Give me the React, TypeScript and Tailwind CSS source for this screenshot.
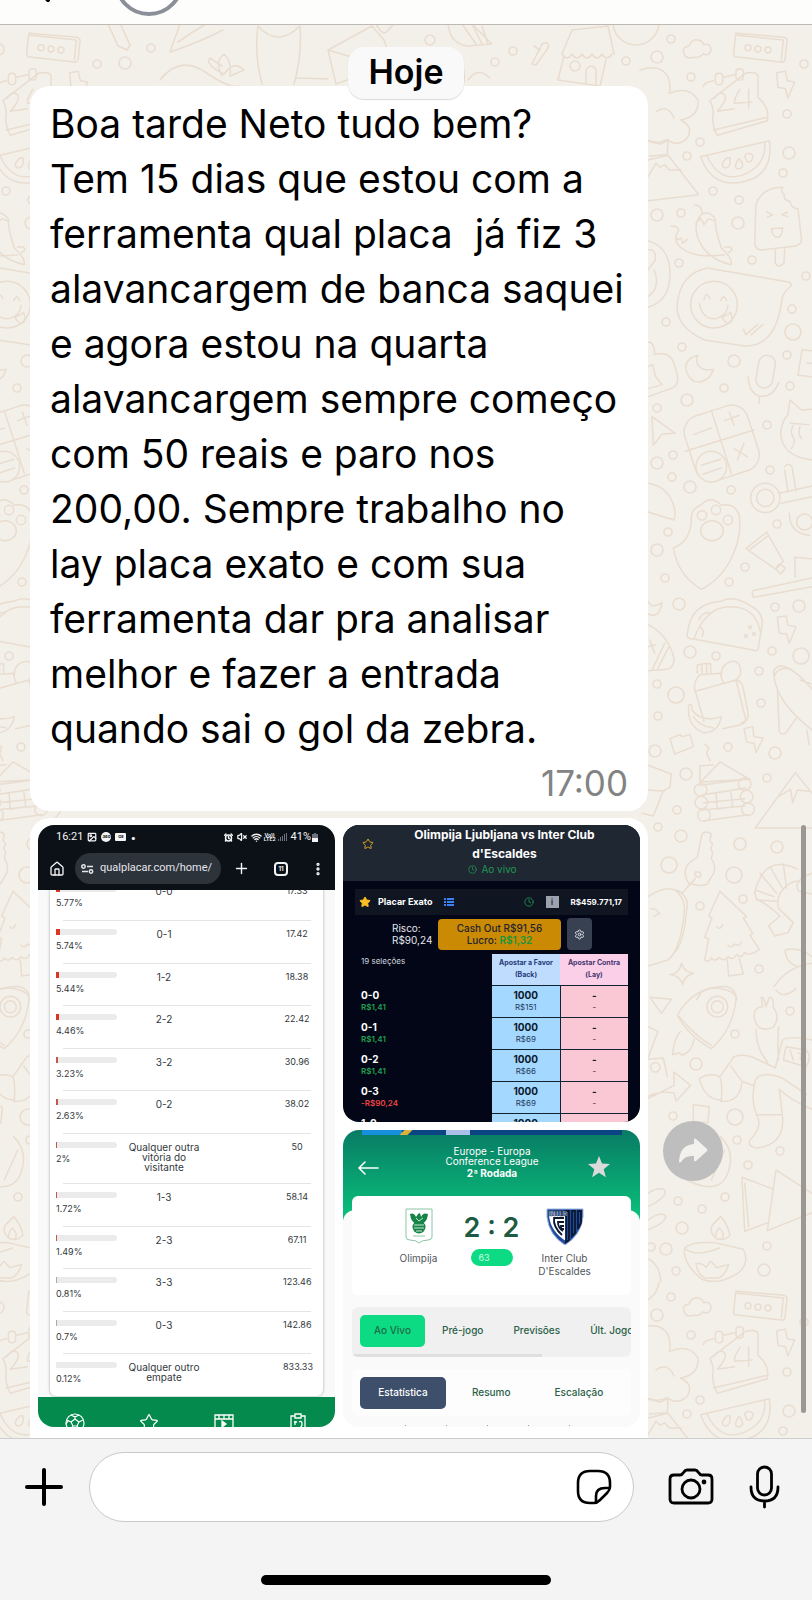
import { useState } from "react"
import { Home, Plus, EllipsisVertical, Star, Clock, Settings, AlarmClock, VolumeX, Wifi, Image as ImageIcon } from "lucide-react"

type Placar = {
  nome: string;
  pct: number;
  odd: string;
};

type Selecao = {
  nome: string;
  lucro: string;
  valor: string;
};

const linhas = [
  "Boa tarde Neto tudo bem?",
  "Tem 15 dias que estou com a",
  "ferramenta qual placa  já fiz 3",
  "alavancargem de banca saquei",
  "e agora estou na quarta",
  "alavancargem sempre começo",
  "com 50 reais e paro nos",
  "200,00. Sempre trabalho no",
  "lay placa exato e com sua",
  "ferramenta dar pra analisar",
  "melhor e fazer a entrada",
  "quando sai o gol da zebra.",
];

const placares: Placar[] = [
  { nome: "0-0", pct: 5.77, odd: "17.33" },
  { nome: "0-1", pct: 5.74, odd: "17.42" },
  { nome: "1-2", pct: 5.44, odd: "18.38" },
  { nome: "2-2", pct: 4.46, odd: "22.42" },
  { nome: "3-2", pct: 3.23, odd: "30.96" },
  { nome: "0-2", pct: 2.63, odd: "38.02" },
  { nome: "Qualquer outra vitória do visitante", pct: 2, odd: "50" },
  { nome: "1-3", pct: 1.72, odd: "58.14" },
  { nome: "2-3", pct: 1.49, odd: "67.11" },
  { nome: "3-3", pct: 0.81, odd: "123.46" },
  { nome: "0-3", pct: 0.7, odd: "142.86" },
  { nome: "Qualquer outro empate", pct: 0.12, odd: "833.33" },
];

const selecoes: Selecao[] = [
  { nome: "0-0", lucro: "R$1,41", valor: "R$151" },
  { nome: "0-1", lucro: "R$1,41", valor: "R$69" },
  { nome: "0-2", lucro: "R$1,41", valor: "R$66" },
  { nome: "0-3", lucro: "-R$90,24", valor: "R$69" },
  { nome: "1-0", lucro: "R$1,41", valor: "R$69" },
];

// [x, y, radius] of the loose bubbles in the wallpaper
const bolhas = [
  [671, 39, 4], [657, 57, 6], [691, 77, 4], [804, 64, 4], [787, 114, 4], [789, 153, 6], [783, 173, 4], [700, 142, 4],
  [687, 156, 4], [713, 191, 4], [739, 200, 4], [738, 223, 6], [657, 215, 6], [681, 213, 4], [752, 260, 4], [679, 263, 4],
  [806, 276, 4], [792, 309, 4], [793, 332, 8], [666, 322, 4], [682, 347, 4], [734, 361, 6], [787, 355, 4], [790, 386, 4],
  [724, 388, 4], [687, 400, 6], [657, 408, 4], [767, 425, 4], [673, 455, 4], [657, 463, 6], [672, 477, 4], [690, 487, 6],
  [731, 490, 4], [770, 470, 4], [777, 524, 4], [668, 532, 4], [657, 550, 6], [745, 567, 4], [729, 582, 4], [665, 578, 4],
  [679, 604, 6], [775, 607, 4], [799, 606, 6], [690, 652, 6], [716, 656, 4], [772, 651, 4], [801, 656, 8], [759, 671, 4],
  [657, 684, 4], [676, 695, 8], [761, 703, 4], [658, 716, 4], [655, 751, 6], [728, 747, 4], [775, 753, 6], [686, 774, 6],
  [767, 778, 4], [677, 810, 4], [658, 827, 4], [681, 836, 6], [669, 865, 8], [740, 844, 6], [777, 847, 6], [734, 875, 8],
  [743, 899, 4], [700, 906, 4], [759, 969, 4], [735, 1034, 4], [790, 1011, 4], [696, 1064, 6], [673, 1116, 4], [735, 1117, 8],
  [737, 1140, 4], [780, 1151, 4], [748, 1165, 4], [725, 1197, 4], [678, 1201, 4], [702, 1209, 4], [682, 1228, 6], [666, 1249, 6],
  [651, 1247, 4], [767, 1246, 4], [764, 1270, 6], [676, 1271, 4], [151, 48, 4], [125, 63, 6], [513, 51, 4], [495, 62, 4],
  [626, 61, 4], [430, 40, 5],
];

function PapelDeParede() {
  return (
    <svg className="absolute inset-0 h-full w-full" aria-hidden="true">
      <defs>
        <pattern id="doodles" x="105" y="-1" width="707" height="1258" patternUnits="userSpaceOnUse">
          <g transform="translate(-105 -24)" fill="none" stroke="#e9ddd0" strokeWidth="1.6" strokeLinejoin="round" strokeLinecap="round">
            {bolhas.map(([x, y, r], i) => <circle key={i} cx={x} cy={y} r={r} />)}

            <path d="M108 24l10 22 9 4 3-5-10-22M170 52l10-28M170 52q30-10 53-22M178 42q14-10 28-18M160 80q20-25 45-8t34 14M222 76q-8-14 2-22 8 8 6 20M224 74q10-14 20-4l-14 6M224 74q-20-10-14-16l12 8M262 84q-8-30-4-58q20 22 42 0q2 30-6 58M296 78l32 1M328 50l44-24 12 14 8 24-56 20zM328 50l34 10M376 24q8 14 12 6l6-6" />
            <path d="M448 24q2 20 20 22l24-2-20-20M462 24l14 20M472 24l10 20M482 26l6 18M404 70q10-22 22-12 18-20 28 4 12 0 10 20M532 64l10-20q8-4 6 4l-12 17zM540 50l-6-4M562 54l10-24 36-4 6 28M562 54q5 8 10 0 5 8 10 0 5 8 10 0 5 8 10 0 5 8 10 0M564 56l-6 24 42 6 6-26M586 84v-14q6-8 10 0v16M468 80q10-14 22-2" />
            <circle cx="575" cy="66" r="5" />
            <circle cx="636" cy="22" r="23" />

            <g transform="translate(640 20) scale(.3333)" strokeWidth="4.500">
              <path d="M135 106q-14-24 12-28 10-26 34-16 14 12 10 12 22-6 22 16-4 20-24 12-10 12-28 10-22 6-26-6zM287 40l146 12q10 4 8 12l-6 56q-4 8-12 6l-138-16q-6-4-4-10l6-56q2-6 8-4M292 46l138 14-6 60" />
              <circle cx="324" cy="83" r="9" /><circle cx="354" cy="87" r="9" /><circle cx="384" cy="90" r="9" />
              <path d="M0 150q60-20 84 20 10 30 4 50 60-24 86 20 4 50-52 60 40 20 20 54-30 30-60 4-30 16-60 2M48 276q34-26 54 18M190 200q0-12 30-18M250 172l34-8M316 160q36-8 38 8v64q36 30 28 70l-150 44q-14-24-14-54 6-20-8-50zM220 330l162-38" />
              <rect x="226" y="160" width="22" height="34" rx="10" /><rect x="288" y="146" width="22" height="34" rx="10" />
              <path d="M222 236q12-24 32-12 10 14-22 50l52-8M300 208q-20 30-16 42l52-4M326 208v56" />
              <path d="M410 158l26-4 6 28 22 4-20 48-8-28-22-4zM182 410l206-48q12 80-44 112-120 50-162-64zM200 406q40 90 120 54 60-30 54-92M248 430q10-20 22-16 4 30-16 30-10-6-6-14M286 440q4-20 12-24 20 24 0 30-10 2-12-6M314 408q10-16 26 0-6 24-20 16z" />
              <path d="M24 364l36 8 24-10-2 42-54 4M24 420l60-14 92 118-152 18M24 470l24-40 12 12 14-8 14 16 36 0" />
              <path d="M428 502q-60 0-80 50l-4 120q4 18 20 18l104-12q20-8 16-24l-10-88q-20 0-24-22-20-2-18-22-12-8-4-20M406 690v40q10 16 26 0l2-42M380 576l18 8-16 8M442 576l-16 8 18 6M394 626l34-2q-2 28-16 28t-18-26" />
              <path d="M164 554q24 2 22 28-24 20-16 60 20 74 104 92 4-20-30-50-20-60-18-86-16-26-40-16M94 618q22 0 22 14-16 20-2 42 40 44 140 30M168 610l14-16 10 20 14-18 16 6M108 660l16-6 4 16 14-12M254 682q20-6 22 8l-10 8" />
              <path d="M24 662q66 20 66 100t-66 100M24 690q24-6 22 30l-22 30M24 830q40-30 18-80M112 850q10-90 90-106l244 42q18 8-4 22-16 16-18 44-20 130-110 126l-120-18q-90-40-82-110z" />
              <circle cx="222" cy="854" r="70" /><path d="M178 850q10 50 50 46 34-8 36-40M192 838q6-26 18-2M242 842q10-22 18 0M246 892l26-14q10 26-4 32-14 0-22-18M310 928l8 16 34-30M334 944l34-30" />
              <path d="M24 966q20 0 20 38 50-16 62 40 18 50-10 60l-70 26M24 1040l14-6 8 34 20 26-42 12M174 1006q-40 10-36 44 12 40 44 36 30-8 38-38-30 6-44-10-10-14-2-32" />
              <rect x="352" y="1006" width="50" height="98" rx="24" transform="rotate(10 377 1055)" />
              <path d="M324 1070q4 50 34 58 40 6 58-40M358 1130v20M516 992l-30-2-12 76 42 4M500 1030h16M36 1190l4 86 26-34 40-2z" />
              <rect x="146" y="1168" width="198" height="204" rx="50" transform="rotate(-18 245 1270)" />
              <path d="M214 1172l60 188M136 1294l206-64M160 1244l54-20M254 1202l44-16M268 1176l14 40M282 1286l40 24M312 1270l-20 50" />
              <circle cx="214" cy="1340" r="46" fill="#f3efe9" /><path d="M184 1336l58-18M190 1362l54-18" />
              <path d="M516 1320q-90-10-94-80 4-40 22-56l6-44 34 30 32-2M450 1210l56 4M460 1216q-12 20 0 36 8 16-6 34M480 1220q-8 20 4 36M434 1340q10-14 22 0l12 74M434 1350l10 66" />
              <circle cx="376" cy="1434" r="44" /><circle cx="376" cy="1434" r="26" /><path d="M418 1420l98-22M424 1450l92-20M24 1390q70 10 82 90l-4 20-78-24" />
            </g>

            <g transform="translate(640 500) scale(.3333)" strokeWidth="4.500">
              <path d="M100 144q54-20 54-90 0-30 30-40 30-30 60 2 40-10 54 30 8 60-20 120-30 70-94 102-70-40-84-124z" />
              <circle cx="186" cy="46" r="14" /><circle cx="228" cy="30" r="14" /><circle cx="264" cy="60" r="14" /><ellipse cx="216" cy="92" rx="34" ry="30" />
              <path d="M318 146l62-50 50 88-22 24zM330 148l56-42M406 206l12-14 18 12-14 18zM338 272l178-38M342 292l174-32M338 272q-4 16 6 20M466 232l-2-60 50 4M448 40q0 60 60 66" /><circle cx="494" cy="66" r="24" />
              <path d="M24 304q10 24 42 4-8 50-42 34M24 374q60 30 78 100 2 24-18 34l-60 4M36 510l38-80M52 508l34-66M30 420l14 40M24 440l22-6M142 400q10-90 100-96 40-20 90 14 40 20 34 60l-12 70q-6 8-14 2l-176-32q-26 0-22-18M162 416q40-110 130-94 60 10 70 80M176 360q14-30 40-20M178 380q20 10 8 30" />
              <circle cx="330" cy="382" r="4" /><circle cx="342" cy="402" r="4" /><circle cx="318" cy="408" r="4" />
              <path d="M412 352l26-4 6 28 24 4-20 50-8-28-22-2zM166 574l122-34 26 106q10 20-12 28l-54 12M166 574l26 90M172 520v-24q20-8 40-4v28M186 520v-26M200 520v-26M164 572q-4-30 16-48l60-4 10 30M244 526q0-40 40-42 20 4 18 40l-16 18M288 540q20 0 24 36l12 60q4 30-20 32M146 616q12-6 10 14 30 40 88 20-10 50-54 48-50-20-44-82M160 650q20 30 60 34" />
              <path d="M402 530q-6-30 22-32 40 6 92 70M402 530q10 80 114 160M402 530q10-30 50-24M412 570l6 124q8 14 20 4l30-42M480 540l36 12M500 690l8 44M90 716l30-12 6 6 24-6 10 36-56 22zM192 732l14 10-6 20 10 20M312 686l26-6 4 30 28 4-22 44-6-28-22-4z" />
              <path d="M182 846l58-60 90 52zM180 800v46M180 798l40-4M180 856l138-18M188 884l130-20M190 908l124-12M184 930l130-12M192 962l134-18M228 878l44-6 6 48-46 8z" />
              <circle cx="182" cy="870" r="19" /><circle cx="184" cy="908" r="19" /><circle cx="192" cy="945" r="19" /><circle cx="314" cy="852" r="19" /><circle cx="320" cy="890" r="19" /><circle cx="324" cy="928" r="19" />
              <path d="M346 984l120-166 50 62M346 984l170 0M418 888l34-20 6 40 14-38 34 4M24 796l70 26-4 40-20 10-30 76-34-8M24 870l50 4" />
              <path d="M186 1002q14-12 28 0l-4 20 8 10-6 14 6 12-4 18q14 20 8 42l-20 34q-20 10-56-2-30-50 26-78zM166 1136l-40 44M176 1132q-20-8-8-16 20-2 12 16M24 1190q90-60 110 30-10 130-50 160l-60 18M110 1170q40 20 30 60-10 110-40 130M32 1226q20 0 24 14M40 1250l20-10" />
              <path d="M240 1174l-34 74 10 6-22 58 12 4-12 64q12 10 20-6 12 14 24-2 14 16 26-2 14 14 26-6 14 14 24-6 16 12 44-10l-28-42 8-6-28-46 10-4zM262 1380l4 48 44-6-12-46M230 1280q10 12 18-6M264 1336q10 10 20-4 12 10 22-6M90 1424q30-4 34-34 10 28 36 30-28 10-32 34-10-28-38-30M170 1500q20-50 90-30 30 10 30 30" />
              <path d="M474 1108q-100-50-130 70l6 20q40 20 70 50l-34 30 18 30 40-10 16-30-44-42q-10-30 14-60 30-30 50-20M360 1120l50 60M390 1100l40 70M430 1092l10 74M346 1170l56 20M350 1200l60 4M516 1120q-60 20-40 54l40 8M402 1460q40-60 114-70M408 1470q20 30 60-4M436 1350q40-10 80 20M436 1350q0 40 40 50" />
            </g>

            <g transform="translate(640 980) scale(.3333)" strokeWidth="4.500">
              <path d="M112 106q50-90 150-86 30 10 26 40-10 90-74 146-70-40-102-100M118 110q50 60 96 86M122 154q-20 20-24 70l20-6 8 8q30-10 36-48" />
              <circle cx="232" cy="80" r="31" /><circle cx="232" cy="80" r="18" />
              <path d="M30 52l64 6-30 42zM24 140l30 14-30 80M24 238l46-4 12 56M24 356q40-20 78-40v-40l50 40-44 48-6-26q-50-6-78 12" /><circle cx="46" cy="262" r="14" />
              <path d="M342 110q0-30 26-30l-4-28q8-2 14 28l10-28q14-4 12 30 22 30 0 60-50 20-58-32M348 148q0 60 36 100M416 140q-4 50 0 100M240 290l42-60q30-10 62 4l62 30M178 296q30-20 60-6 10 10 6 70-50 0-66-64M242 364q60 4 64-60l-34-46M306 304l38 14M406 264l20-80q10-20 90-4M346 300q-16 60 4 102 20 40-20 78-10 20 22 24 80-10 76-90l-10-86q30 30 98 60M346 300q20-30 80-6l74 50M348 404h78M430 240l8-40 60 10q20 20 0 50zM450 210l10 30M476 220q14 0 4 16l10 8" />
              <path d="M160 374l48 6-4 48-44-4zM140 600q120 60 132-60 0-40-30-70M214 600l40-90M306 592l90 34M306 592l8 162 70-26M326 740l-12-130M408 570l108 70M408 570l-26 182 134-54M24 640q30-20 50-10 10 20-50 50M24 720q40-30 54-10-4 20-54 40M24 836q40 20 38 80-10 40-38 50" />
              <path d="M134 804q20-20 90-16l86 20q20 40-14 70-60 40-110 20-60-50-52-94M134 804q30 30 104 0M226 774q-20-20-8-40l24-24q20 20 28 56-20 20-44 8M226 774q0-20 12-30 20 20 6 34M168 850q20 0 30 12l14-18 20 20q14-8 34-10-10 30-30 40h-40q-24-10-28-44" />
            </g>
          </g>
        </pattern>
      </defs>
      <rect width="100%" height="100%" fill="#f3efe9" />
      <rect width="100%" height="100%" fill="url(#doodles)" />
    </svg>
  )
}

function PrintPlacares() {
  return (
    <section className="row-span-2 flex flex-col overflow-hidden rounded-2xl bg-[#f9f9f9]">
      <div className="h-[65px] shrink-0 bg-[#0b1117] text-gray-100">
        <div className="flex h-6 items-center gap-1 pl-[18px] pr-[17px] text-[10px]">
          <span className="font-['Roboto',sans-serif] text-[11px]">16:21</span>
          <ImageIcon size={10} strokeWidth={3} className="shrink-0" />
          <span className="flex size-[10px] shrink-0 items-center justify-center rounded-full bg-gray-100 text-[4px] font-bold text-black">360</span>
          <span className="flex h-[8px] w-[11px] shrink-0 items-center justify-center rounded-[1px] bg-gray-100 text-[4px] font-bold text-black">GE</span>
          <span>•</span>
          <AlarmClock className="ml-auto shrink-0" size={9} strokeWidth={4} />
          <VolumeX className="shrink-0" size={10} strokeWidth={3} />
          <Wifi className="shrink-0" size={11} strokeWidth={3} />
          <span className="-ml-[2px] text-center text-[5px] font-bold leading-[4px]">Vo))<br />LTE2</span>
          <svg className="-ml-[2px] shrink-0" width="9" height="8" viewBox="0 0 9 8" fill="#6b7280"><path d="M0 6h1v2H0zM2 4h1v4H2zM4 3h1v5H4zM6 1h1v7H6zM8 0h1v8H8z" /></svg>
          <span className="-mr-[3px] font-['Roboto',sans-serif] text-[11px]">41%</span>
          <svg className="shrink-0" width="6" height="9" viewBox="0 0 6 9"><path d="M2 0h2v1h2v8H0V1h2z" fill="#6b7280" /><path d="M0 5h6v4H0z" fill="#f3f4f6" /></svg>
        </div>
        <div className="mt-1 flex h-[31px] items-center pl-[11px] pr-[9px]">
          <button aria-label="Início" className="shrink-0"><Home size={16} strokeWidth={2} /></button>
          <div className="ml-[10px] flex h-[31px] min-w-0 flex-1 items-center gap-[6px] whitespace-nowrap rounded-full bg-[#2d333b] pl-[6px] font-['Roboto',sans-serif] text-[11px] text-gray-200">
            <svg className="shrink-0" width="13" height="10" viewBox="0 0 13 10" fill="none" stroke="currentColor" strokeWidth="1.5"><circle cx="2.5" cy="2.5" r="1.7" /><path d="M6 2.5h6M1 7.5h6" /><circle cx="10" cy="7.5" r="1.7" /></svg>
            qualplacar.com/home/
          </div>
          <button aria-label="Nova aba" className="ml-3 shrink-0"><Plus size={17} strokeWidth={2} /></button>
          <button aria-label="Abas" className="ml-6 flex size-[14px] shrink-0 items-center justify-center rounded-[4px] border-2 border-gray-100 text-[6px] font-bold">11</button>
          <button aria-label="Menu" className="ml-[22px] shrink-0"><EllipsisVertical size={16} strokeWidth={3} /></button>
        </div>
      </div>

      <div className="min-h-0 flex-1 overflow-hidden px-3">
        <div className="-mt-3 rounded-md bg-white pl-[13px] pr-3 shadow-[0_0_3px_rgba(0,0,0,0.35)]">
          <table className="w-full table-fixed border-collapse text-[9px] text-[#33383d]">
            <tbody>
              {placares.map((p) => (
                <tr key={p.nome} className="h-[42px] border-b border-[#e4e4e4] last:border-b-0 even:h-[43px]">
                  <td className="w-16 pt-2 align-top">
                    <div className="-ml-[7px] h-[6px] w-[61px] overflow-hidden rounded-r-full bg-[#ebebeb]">
                      <div className={p.pct > 4 ? "h-full bg-[#dc3623]" : p.pct > 1 ? "h-full bg-[#c4574b]" : "h-full bg-[#aaaaaa]"} style={{ width: `${p.pct}%` }} />
                    </div>
                    <div className="-ml-[7px] mt-[5px] leading-3">{p.pct}%</div>
                  </td>
                  <td className="w-[74px] pt-2 pb-[11px] text-center align-top text-[10px] leading-[10px]">
                    {p.nome}
                  </td>
                  <td className="whitespace-nowrap pt-2 pl-[82px] text-center align-top leading-[10px]">{p.odd}</td>
                </tr>
              ))}
            </tbody>
          </table>
        </div>
      </div>

      <nav className="flex h-[30px] shrink-0 justify-around bg-[#058a4e] pt-4 text-white">
        <svg width="20" height="20" viewBox="0 0 20 20" fill="none" stroke="currentColor" strokeWidth="1.2"><circle cx="10" cy="10" r="9" /><path d="M10 6l4 3-2 4H8L6 9zM10 6V3M14 9l4-2M6 9L2 7M8 13l-3 4M12 13l3 4M6 2l4 2 4-2M1 11l2-3" /></svg>
        <Star size={20} strokeWidth={1.5} />
        <svg width="20" height="20" viewBox="0 0 20 20" fill="none" stroke="currentColor" strokeWidth="1.3"><path d="M1 2h18v16H1zM1 6h18M5 2v4M10 2v4M15 2v4" /><path d="M8 8l4 3-4 3z" fill="currentColor" /></svg>
        <svg width="20" height="20" viewBox="0 0 20 20" fill="none" stroke="currentColor" strokeWidth="1.3"><path d="M7 3H3v16h14V3h-4M7 1h6v4H7zM7 8v4M6 9h3M11 9q3-2 3 2t-4 4" /></svg>
      </nav>
    </section>
  )
}

function PrintMercado() {
  return (
    <section className="flex h-[297px] flex-col overflow-hidden rounded-2xl bg-[#020617] text-white">
      <div className="flex h-14 shrink-0 items-start bg-[#1f2733] pl-[19px] pr-[13px]">
        <button aria-label="Favorito" className="mt-[13px] text-[#d9a22b]"><Star size={12} strokeWidth={2} /></button>
        <div className="flex flex-1 flex-col items-center pl-6 pr-4 text-center">
          <h2 className="whitespace-nowrap text-[12px] font-bold leading-[19px]">Olimpija Ljubljana vs Inter Club<br />d'Escaldes</h2>
          <span className="mr-6 flex items-center gap-1 text-[10px] leading-3 text-[#209653]"><Clock size={9} /> Ao vivo</span>
        </div>
      </div>

      <div className="mx-3 mt-2 flex h-[26px] shrink-0 items-center bg-[#0f1521] pl-1 pr-[6px]">
        <Star size={12} className="fill-[#fbbf24] text-[#fbbf24]" />
        <span className="ml-[7px] text-[9px] font-bold">Placar Exato</span>
        <svg className="ml-[11px]" width="10" height="8" viewBox="0 0 10 8" fill="#3b82f6"><path d="M0 0h2v2H0zM3 0h7v2H3zM0 3h2v2H0zM3 3h7v2H3zM0 6h2v2H0zM3 6h7v2H3z" /></svg>
        <Clock size={10} className="ml-auto text-[#209653]" />
        <span className="ml-3 flex h-3 w-[13px] items-center justify-center bg-[#9ca3af] text-[9px] font-bold text-[#374151]">i</span>
        <span className="ml-3 text-[8px] font-bold">R$459.771,17</span>
      </div>

      <div className="mt-[3px] flex h-8 shrink-0 items-center pl-[49px]">
        <p className="w-[46px] text-[10px] leading-3 text-gray-200">Risco:<br />R$90,24</p>
        <button className="h-[31px] w-[123px] rounded-sm bg-[#ca8a04] text-[10px] font-medium leading-3 text-[#1f2430]">
          Cash Out R$91,56<br />Lucro: <span className="font-semibold text-[#15963f]">R$1,32</span>
        </button>
        <button aria-label="Configurações" className="ml-[6px] flex h-8 w-[25px] items-center justify-center rounded-sm bg-[#374151] text-gray-200"><Settings size={11} /></button>
      </div>

      <table className="ml-[18px] mr-3 mt-1 table-fixed text-center">
        <thead>
          <tr className="h-[31px] text-[7px] leading-3">
            <th className="pt-px text-left align-top text-[8px] font-normal text-gray-300">19 seleções</th>
            <th className="w-[68px] bg-[#bfdbfe] font-bold text-[#243c78]">Apostar a Favor<br />(Back)</th>
            <th className="w-[68px] bg-[#fbcfe8] font-bold text-[#46366e]">Apostar Contra<br />(Lay)</th>
          </tr>
        </thead>
        <tbody>
          {selecoes.map((s) => (
            <tr key={s.nome} className="h-8 text-[8px] leading-3">
              <td className="pt-1 text-left align-top font-semibold">
                <div className="text-[10px] font-bold">{s.nome}</div>
                <div className={s.lucro.startsWith("-") ? "text-[#ef4444]" : "text-[#22a04f]"}>{s.lucro}</div>
              </td>
              <td className="border-t border-r border-[#123] bg-[#a5d8ff] pt-[3px] align-top text-[#1e3a5c]">
                <div className="text-[10px] font-bold text-[#0b1a2e]">1000</div>
                <div>{s.valor}</div>
              </td>
              <td className="border-t border-[#123] bg-[#fac8d5] pt-[3px] align-top text-[#4c2436]">
                <div className="text-[10px] font-bold text-[#0b1a2e]">-</div>
                <div>-</div>
              </td>
            </tr>
          ))}
        </tbody>
      </table>
    </section>
  )
}

function PrintJogo() {
  const [aba, setAba] = useState("Ao Vivo");

  return (
    <section className="flex h-[297px] flex-col overflow-hidden rounded-2xl bg-[#fafafa] text-[10px] text-[#2a6148]">
      <div className="h-[92px] shrink-0 bg-linear-to-b from-[#087b64] to-[#0bc47b] text-white">
        <div className="ml-[19px] mr-[18px] flex h-[5px] bg-[#0b4583]">
          <div className="w-10 bg-[#168fdd]" />
          <div className="h-[5px] w-2 -skew-x-45 bg-[#d9b23c]" />
          <div className="ml-9 w-6 bg-[#a9bfe8]" />
        </div>
        <div className="flex items-start pl-[14px] pr-[29px] pt-[11px]">
          <button aria-label="Voltar" className="mt-[15px]"><svg width="22" height="14" viewBox="0 0 22 14" fill="none" stroke="currentColor" strokeWidth="1.5" strokeLinecap="round"><path d="M21 7H2M8 1L2 7l6 6" /></svg></button>
          <h3 className="flex-1 pl-[18px] text-center font-normal leading-[10px]">
            Europe - Europa<br />Conference League
            <span className="mt-px block font-bold leading-3">2ª Rodada</span>
          </h3>
          <button aria-label="Favoritar" className="mt-[9px]"><svg width="24" height="24" viewBox="0 0 24 24" fill="#dadada"><path d="M12 1l3 7.600 8 .4-6.300 5.200 2.200 8L12 17.800 5.100 22.200l2.200-8L1 9l8-.4z" /></svg></button>
        </div>
      </div>

      <div className="-mt-3 flex-1 rounded-t-xl bg-[#fafafa] px-[9px]">
        <div className="-mt-[14px] flex h-[99px] justify-center rounded-md bg-white pt-3 text-center leading-[13px] text-[#50555a]">
          <div className="flex w-[80px] flex-col items-center">
            <svg width="28" height="36" viewBox="0 0 28 36" fill="none"><path d="M1 1h26v28q0 3-4 3-6 0-9 3-3-3-9-3-4 0-4-3z" stroke="#8cc4a4" fill="#fff" /><path d="M5 6q4-2 6 3l2-3 2-1 1 4q2-5 7-3-1 8-5 9H10Q6 14 5 6z" fill="#168347" /><circle cx="14" cy="19" r="6.500" fill="#168347" /><path d="M9 17h10M9 20h10M11 23h6M11 10l3 3 4-3" stroke="#c9e6d4" /><path d="M8 28h12" stroke="#8cc4a4" /></svg>
            <span className="mt-2">Olimpija</span>
          </div>
          <div className="flex w-[66px] flex-col items-center">
            <strong className="whitespace-pre pt-[5px] text-[27px] font-semibold leading-[30px] text-[#1f5b42]">2 : 2</strong>
            <span className="mt-[6px] h-[17px] w-[42px] rounded-full bg-[#0ddb84] pl-2 text-left text-[9px] leading-[17px] text-[#c9ffe6]">63</span>
          </div>
          <div className="flex w-[80px] flex-col items-center">
            <svg width="38" height="38" viewBox="0 0 38 38"><path d="M1 1h36v8q-2 18-18 28Q3 27 1 9z" fill="#1f4c9c" stroke="#9bb3dc" /><path d="M3 8h17v25Q5 24 3 8z" fill="#fff" /><path d="M20 3h3v29l-3 2zM26 3h3v22l-3 3zM32 3h3v12l-3 6zM18 10H8q-1 9 8 17M18 14h-6q0 6 5 9M18 18h-3v3h3" fill="none" stroke="#0c1730" strokeWidth="1.800" /><text x="3" y="8" fontSize="6" fontWeight="bold" fill="#fff" stroke="#0c1730" strokeWidth=".3">INTER</text></svg>
            <span className="mt-[6px]">Inter Club D'Escaldes</span>
          </div>
        </div>

        <div className="mt-3 h-[50px] overflow-hidden rounded-md bg-[#f0f0f0]">
          <div className="flex h-[47px] items-center gap-3 whitespace-nowrap pl-2 font-medium">
            {["Ao Vivo", "Pré-jogo", "Previsões", "Últ. Jogos"].map((t) => (
              <button
                key={t}
                onClick={() => setAba(t)}
                className={aba === t ? "-mr-1 h-8 w-[65px] shrink-0 rounded-[5px] bg-[#0ddb84] text-[#1c6d47]" : "h-8 shrink-0 px-[9px]"}
              >
                {t}
              </button>
            ))}
          </div>
          <div className="h-[3px] w-[68%] bg-[#dfdfdf]" />
        </div>

        <div className="mt-3 flex h-[47px] items-center rounded-md bg-[#fdfdfd] pl-2 font-medium">
          <button className="h-8 w-[86px] rounded-[5px] bg-[#3d4f6b] text-white">Estatística</button>
          <button className="ml-[26px]">Resumo</button>
          <button className="ml-11">Escalação</button>
        </div>
        <div className="mt-[9px] flex h-px gap-10 pl-[53px]">
          {[0, 1, 2, 3, 4].map((i) => <span key={i} className="h-px w-px bg-gray-400" />)}
        </div>
      </div>
    </section>
  )
}

export default function App() {
  const [texto, setTexto] = useState("");

  return (
    <div className="flex h-screen flex-col overflow-hidden bg-[#f4f4f4] font-['Inter',sans-serif] text-black">
      <header className="h-[25px] shrink-0 overflow-hidden border-b border-[#bdbab5] bg-[#fdfdfb]">
        <svg width="200" height="24" viewBox="0 0 200 24" fill="none" aria-hidden="true">
          <circle cx="149" cy="-19" r="33" stroke="#8b8f98" strokeWidth="4" fill="#fff" />
          <path d="M44-4l4 4" stroke="#000" strokeWidth="4" strokeLinecap="round" />
        </svg>
      </header>

      <main className="relative min-h-0 flex-1 overflow-hidden">
        <PapelDeParede />
        <div className="relative flex flex-col pt-[22px] pl-[30px]">
          <div className="relative z-10 -mb-[13px] mr-[30px] flex h-[52px] items-center self-center rounded-2xl bg-[#f9f9f9] px-5 pb-1 text-[34px] font-semibold shadow-[0_1px_1px_rgba(0,0,0,0.15)]">Hoje</div>

          <article className="mr-[164px] rounded-[20px] bg-white px-5 pb-2 pt-[10px]">
            <p className="whitespace-pre text-[39px] leading-[55px]">{linhas.join("\n")}</p>
            <time className="mt-[7px] block text-right text-[35px] leading-10 text-[#838383]">17:00</time>
          </article>

          <div className="mt-[7px] flex items-center pr-[89px]">
            <article className="grid flex-1 grid-cols-2 gap-2 rounded-[20px] bg-white px-2 pb-14 pt-[7px]">
              <PrintPlacares />
              <PrintMercado />
              <PrintJogo />
            </article>
            <button aria-label="Encaminhar" className="ml-[15px] flex size-[60px] items-center justify-center rounded-full bg-[#bebebe]">
              <svg width="30" height="26" viewBox="0 0 30 26" fill="#f3f1ee"><path d="M16 1q1-1 2 0l11 10q1 1 0 2L18 23q-2 1-2-1v-4Q7 17 3 24q-2 2-2-1Q2 7 16 6z" /></svg>
            </button>
          </div>
        </div>
        <div className="absolute right-[6px] top-[800px] h-[588px] w-[5px] rounded-full bg-[#9b9894]" />
      </main>

      <footer className="shrink-0 border-t border-[#cdcdcd] bg-[#f4f4f4] pb-[15px]">
        <form className="flex items-center pl-[25px] pr-8 pt-[13px]" onSubmit={(e) => e.preventDefault()}>
          <button type="button" aria-label="Anexar" className="shrink-0">
            <svg width="38" height="38" viewBox="0 0 38 38" stroke="#000" strokeWidth="4" strokeLinecap="round"><path d="M19 2v34M2 19h34" /></svg>
          </button>
          <div className="ml-[26px] flex h-[70px] min-w-0 flex-1 items-center rounded-full border border-[#c9c9c9] bg-white pl-8 pr-[21px]">
            <input
              aria-label="Mensagem"
              value={texto}
              onChange={(e) => setTexto(e.target.value)}
              className="min-w-0 flex-1 bg-transparent text-[34px] focus:outline-none"
            />
            <button type="button" aria-label="Figurinhas" className="shrink-0">
              <svg width="36" height="36" viewBox="0 0 36 36" fill="none" stroke="#000" strokeWidth="2.600" strokeLinejoin="round"><path d="M34 18v-4Q34 2 22 2h-8Q2 2 2 14v8q0 12 12 12h4q3 0 6-3l7-7q3-3 3-6z" /><path d="M34 19h-5q-9 0-9 8v6" /></svg>
            </button>
          </div>
          <button type="button" aria-label="Câmera" className="ml-[34px] shrink-0">
            <svg width="46" height="38" viewBox="0 0 46 38" fill="none" stroke="#000" strokeWidth="2.800" strokeLinejoin="round"><path d="M6 7h6q2 0 3-2l1-1q1-2 3-2h8q2 0 3 2l1 1q1 2 3 2h6q4 0 4 4v20q0 4-4 4H6q-4 0-4-4V11q0-4 4-4z" /><circle cx="23" cy="21" r="9" /><circle cx="36" cy="14" r="1" fill="#000" /></svg>
          </button>
          <button type="button" aria-label="Gravar áudio" className="ml-[35px] shrink-0">
            <svg width="31" height="44" viewBox="0 0 31 44" fill="none" stroke="#000" strokeWidth="2.800" strokeLinecap="round"><rect x="8.500" y="2" width="14" height="28" rx="7" /><path d="M2 22q0 14 13.500 14T29 22M15.500 36v6" /></svg>
          </button>
        </form>
        <div className="mx-auto mt-[53px] h-[10px] w-[290px] rounded-full bg-black" />
      </footer>
    </div>
  )
}
